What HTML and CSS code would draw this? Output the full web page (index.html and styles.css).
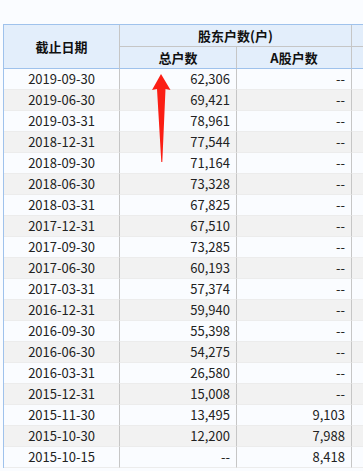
FILE: index.html
```html
<!DOCTYPE html>
<html lang="zh">
<head>
<meta charset="utf-8">
<link rel="stylesheet" href="styles.css">
</head>
<body>
<div class="wrap">
<table class="tbl">
<colgroup>
<col class="c1"><col class="c2"><col class="c3"><col class="c4">
</colgroup>
<thead>
<tr class="h1">
<th rowspan="2" class="hl">截止日期</th>
<th colspan="2">股东户数(户)</th>
<th class="last"></th>
</tr>
<tr class="h2">
<th>总户数</th>
<th>A股户数</th>
<th class="last"></th>
</tr>
</thead>
<tbody>
<tr><td class="d">2019-09-30</td><td>62,306</td><td>--</td><td class="last"></td></tr>
<tr><td class="d">2019-06-30</td><td>69,421</td><td>--</td><td class="last"></td></tr>
<tr><td class="d">2019-03-31</td><td>78,961</td><td>--</td><td class="last"></td></tr>
<tr><td class="d">2018-12-31</td><td>77,544</td><td>--</td><td class="last"></td></tr>
<tr><td class="d">2018-09-30</td><td>71,164</td><td>--</td><td class="last"></td></tr>
<tr><td class="d">2018-06-30</td><td>73,328</td><td>--</td><td class="last"></td></tr>
<tr><td class="d">2018-03-31</td><td>67,825</td><td>--</td><td class="last"></td></tr>
<tr><td class="d">2017-12-31</td><td>67,510</td><td>--</td><td class="last"></td></tr>
<tr><td class="d">2017-09-30</td><td>73,285</td><td>--</td><td class="last"></td></tr>
<tr><td class="d">2017-06-30</td><td>60,193</td><td>--</td><td class="last"></td></tr>
<tr><td class="d">2017-03-31</td><td>57,374</td><td>--</td><td class="last"></td></tr>
<tr><td class="d">2016-12-31</td><td>59,940</td><td>--</td><td class="last"></td></tr>
<tr><td class="d">2016-09-30</td><td>55,398</td><td>--</td><td class="last"></td></tr>
<tr><td class="d">2016-06-30</td><td>54,275</td><td>--</td><td class="last"></td></tr>
<tr><td class="d">2016-03-31</td><td>26,580</td><td>--</td><td class="last"></td></tr>
<tr><td class="d">2015-12-31</td><td>15,008</td><td>--</td><td class="last"></td></tr>
<tr><td class="d">2015-11-30</td><td>13,495</td><td>9,103</td><td class="last"></td></tr>
<tr><td class="d">2015-10-30</td><td>12,200</td><td>7,988</td><td class="last"></td></tr>
<tr><td class="d">2015-10-15</td><td>--</td><td>8,418</td><td class="last"></td></tr>
</tbody>
</table>
<svg class="arrow" width="24" height="96" viewBox="0 0 24 96">
<path d="M9 0 L18.5 16 L13.5 15 L10.3 88 L9.3 88 L5 15 L0 16 Z" fill="#fb1e14"/>
</svg>
</div>
</body>
</html>
```
FILE: styles.css
```css
html, body {
  margin: 0;
  padding: 0;
  background: #fafcff;
  overflow: hidden;
}
body {
  width: 363px;
  height: 471px;
}
.wrap {
  position: relative;
  padding: 24px 0 0 3px;
}
.tbl {
  border-collapse: separate;
  border-spacing: 0;
  table-layout: fixed;
  width: 360px;
  border-top: 1px solid #9fc2ec;
  border-left: 1px solid #9fc2ec;
  font-family: "Noto Sans CJK SC", "Noto Sans", sans-serif;
  font-size: 13px;
  color: #222;
}
.c1 { width: 116px; }
.c2 { width: 117px; }
.c3 { width: 115px; }
.c4 { width: 11px; }
.tbl th, .tbl td {
  box-sizing: border-box;
  padding: 0 6px;
  border-right: 1px solid #c6c6c6;
  white-space: nowrap;
  overflow: hidden;
}
.tbl th.last, .tbl td.last {
  border-right: none;
  padding: 0;
}
.tbl th {
  background: #e3eefb;
  font-weight: bold;
  color: #111;
  height: 22px;
  line-height: 21px;
  text-align: center;
}
.h1 th { border-bottom: 1px solid #c6c6c6; }
.h1 th.hl { border-bottom: 1px solid #9fc2ec; }
.h2 th { border-bottom: 1px solid #9fc2ec; }
.tbl td {
  height: 21px;
  line-height: 20px;
  text-align: right;
  border-bottom: 1px solid #ececec;
}
.tbl td.d { text-align: center; }
.tbl tbody tr:nth-child(even) td { background: #f2f2f2; }
.tbl tbody tr:nth-child(odd) td { background: #fafcff; }
.arrow {
  position: absolute;
  left: 152px;
  top: 74px;
}
```
